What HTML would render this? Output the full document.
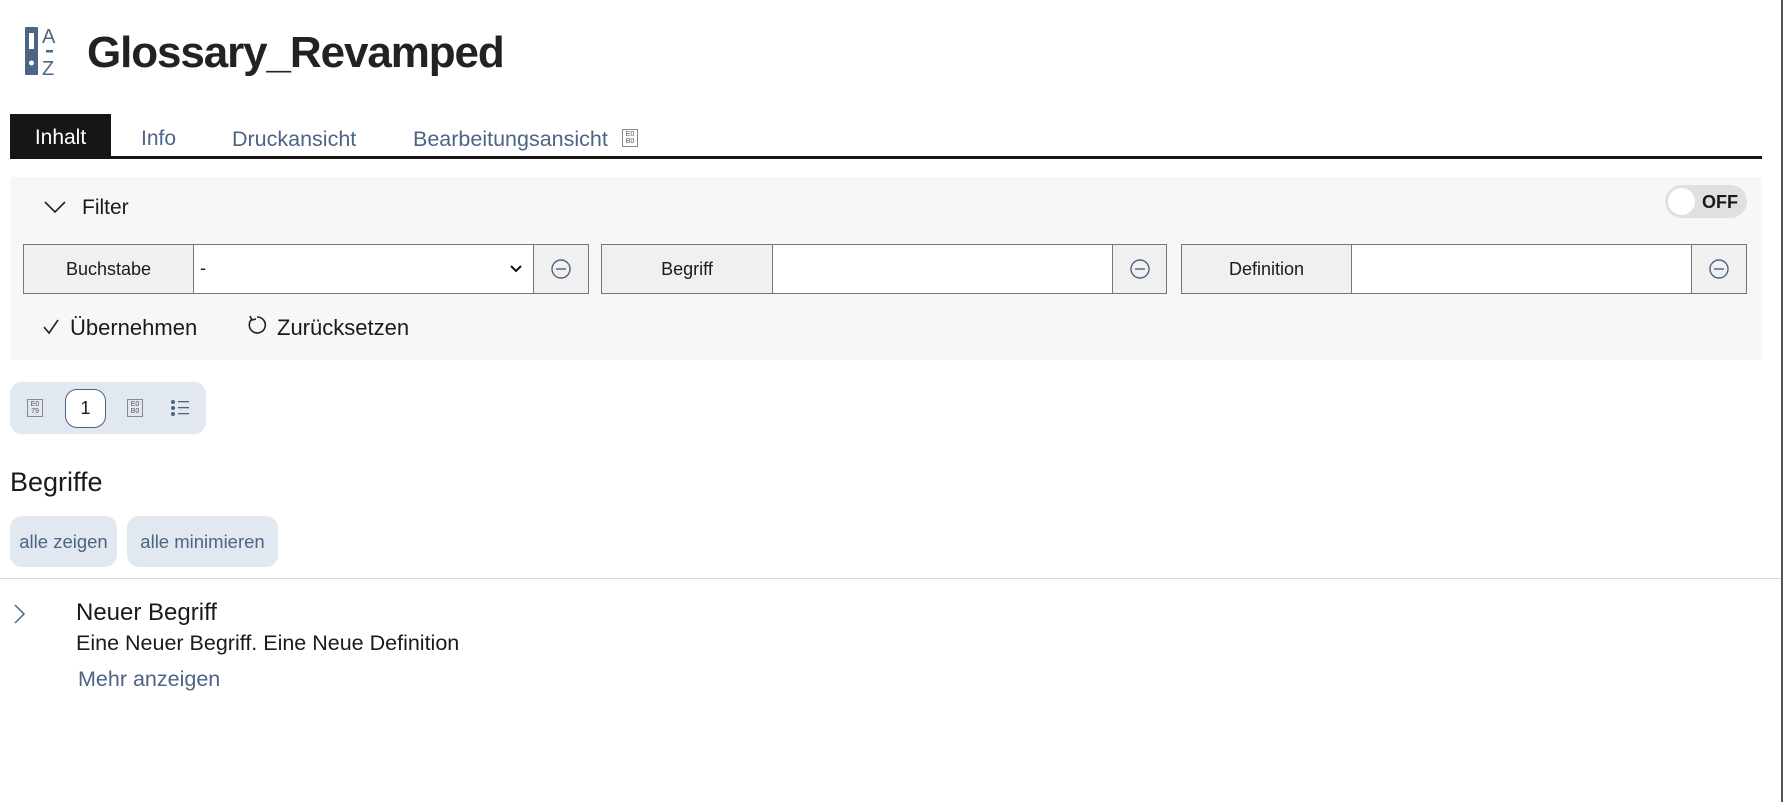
<!DOCTYPE html>
<html><head><meta charset="utf-8"><style>
*{box-sizing:border-box;margin:0;padding:0}
body{width:1783px;height:802px;overflow:hidden;background:#fff;font-family:"Liberation Sans",sans-serif;color:#1a1a1a;position:relative}
.a{position:absolute}
.blue{color:#4c6485}
.grp{position:absolute;top:244px;height:50px;border:1px solid #767676;display:flex;background:#fff}
.grp .lb{background:#f0f0f0;border-right:1px solid #767676;font-size:18px;display:flex;align-items:center;justify-content:center}
.grp .bt{background:#f0f0f0;border-left:1px solid #767676;display:flex;align-items:center;justify-content:center}
.btn{position:absolute;top:516px;height:51px;background:#e2e8f0;border-radius:12px;font-size:18.5px;color:#4c6485;display:flex;align-items:center;justify-content:center}
</style></head><body>
<svg class="a" style="left:25px;top:25px" width="40" height="52" viewBox="0 0 40 52">
<rect x="0" y="2" width="13" height="48" rx="1" fill="#4c6485"/><rect x="4" y="8" width="5" height="16" fill="#fff"/><circle cx="6.5" cy="38" r="2.5" fill="#fff"/>
<text x="17" y="18" font-family="Liberation Sans" font-size="20" fill="#4c6485">A</text>
<rect x="21" y="25" width="7" height="2.5" fill="#4c6485"/>
<text x="17" y="50" font-family="Liberation Sans" font-size="20" fill="#4c6485">Z</text></svg>
<div class="a" style="left:87px;top:28px;font-size:44px;font-weight:bold;color:#222;letter-spacing:-1.1px">Glossary_Revamped</div>

<div class="a" style="left:10px;top:114px;width:101px;height:43px;background:#161616;color:#fff;font-size:21px;display:flex;align-items:center;justify-content:center;padding-top:4px">Inhalt</div>
<div class="a blue" style="left:141px;top:127px;font-size:21px">Info</div>
<div class="a blue" style="left:232px;top:127px;font-size:21.5px">Druckansicht</div>
<div class="a blue" style="left:413px;top:127px;font-size:21.5px">Bearbeitungsansicht</div>
<div class="a" style="left:622px;top:129px;width:16px;height:18px;border:1px solid #888;font-size:7px;line-height:7px;text-align:center;padding-top:1px;color:#555">E0<br>B0</div>
<div class="a" style="left:10px;top:156px;width:1752px;height:3px;background:#161616"></div>

<div class="a" style="left:10px;top:177px;width:1752px;height:183px;background:#f7f7f7"></div>
<svg class="a" style="left:44px;top:200px" width="22" height="14"><path d="M1 2 L11 12 L21 2" stroke="#222" stroke-width="1.6" fill="none"/></svg>
<div class="a" style="left:82px;top:196px;font-size:21px">Filter</div>
<div class="a" style="left:1665px;top:185px;width:82px;height:33px;border-radius:17px;background:#e0e0e0"></div>
<div class="a" style="left:1668px;top:188px;width:27px;height:27px;border-radius:50%;background:#fff"></div>
<div class="a" style="left:1702px;top:192px;font-size:18px;font-weight:bold">OFF</div>

<div class="grp" style="left:23px;width:566px"><div class="lb" style="width:170px">Buchstabe</div><div style="width:339px;position:relative;font-size:18px;padding:13px 6px">-<svg class="a" style="right:10px;top:19px" width="14" height="10"><path d="M2 2 L7 7 L12 2" stroke="#111" stroke-width="2" fill="none"/></svg></div><div class="bt" style="flex:1"><svg width="22" height="22"><circle cx="11" cy="11" r="9" stroke="#4c6485" stroke-width="1.4" fill="none"/><path d="M6 11h10" stroke="#4c6485" stroke-width="1.4"/></svg></div></div>
<div class="grp" style="left:601px;width:566px"><div class="lb" style="width:171px">Begriff</div><div style="width:339px"></div><div class="bt" style="flex:1"><svg width="22" height="22"><circle cx="11" cy="11" r="9" stroke="#4c6485" stroke-width="1.4" fill="none"/><path d="M6 11h10" stroke="#4c6485" stroke-width="1.4"/></svg></div></div>
<div class="grp" style="left:1181px;width:566px"><div class="lb" style="width:170px">Definition</div><div style="width:339px"></div><div class="bt" style="flex:1"><svg width="22" height="22"><circle cx="11" cy="11" r="9" stroke="#4c6485" stroke-width="1.4" fill="none"/><path d="M6 11h10" stroke="#4c6485" stroke-width="1.4"/></svg></div></div>

<svg class="a" style="left:42px;top:318px" width="18" height="18"><path d="M2 9 L7 15 L16 2" stroke="#222" stroke-width="1.6" fill="none"/></svg>
<div class="a" style="left:70px;top:315px;font-size:22px">Übernehmen</div>
<svg class="a" style="left:246px;top:314px" width="22" height="22"><path d="M6 5 A8 8 0 1 0 11 3" stroke="#222" stroke-width="1.6" fill="none"/><path d="M4 2 L6 6 L10 5" stroke="#222" stroke-width="1.6" fill="none"/></svg>
<div class="a" style="left:277px;top:315px;font-size:22px">Zurücksetzen</div>

<div class="a" style="left:10px;top:382px;width:196px;height:52px;border-radius:12px;background:#e2e8f0"></div>
<div class="a" style="left:27px;top:399px;width:16px;height:18px;border:1px solid #888;font-size:7px;line-height:7px;text-align:center;padding-top:1px;color:#555">E0<br>79</div>
<div class="a" style="left:65px;top:389px;width:41px;height:39px;border:1px solid #4c6485;border-radius:12px;background:#fff;font-size:18px;display:flex;align-items:center;justify-content:center">1</div>
<div class="a" style="left:127px;top:399px;width:16px;height:18px;border:1px solid #888;font-size:7px;line-height:7px;text-align:center;padding-top:1px;color:#555">E0<br>B0</div>
<svg class="a" style="left:170px;top:399px" width="20" height="18"><g fill="#4c6485"><circle cx="3" cy="3" r="2"/><circle cx="3" cy="9" r="2"/><circle cx="3" cy="15" r="2"/><rect x="8" y="2" width="11" height="1.3"/><rect x="8" y="8" width="11" height="1.3"/><rect x="8" y="14" width="11" height="1.3"/></g></svg>

<div class="a" style="left:10px;top:467px;font-size:27px">Begriffe</div>
<div class="btn" style="left:10px;width:107px">alle zeigen</div>
<div class="btn" style="left:127px;width:151px">alle minimieren</div>
<div class="a" style="left:0;top:578px;width:1783px;height:1px;background:#d8d8d8"></div>

<svg class="a" style="left:13px;top:603px" width="14" height="22"><path d="M2 2 L11 11 L2 20" stroke="#4c6485" stroke-width="1.5" fill="none"/></svg>
<div class="a" style="left:76px;top:599px;font-size:24px">Neuer Begriff</div>
<div class="a" style="left:76px;top:631px;font-size:21.5px">Eine Neuer Begriff. Eine Neue Definition</div>
<div class="a blue" style="left:78px;top:667px;font-size:21.5px">Mehr anzeigen</div>

<div class="a" style="left:1781px;top:0;width:2px;height:802px;background:#555"></div>
</body></html>
